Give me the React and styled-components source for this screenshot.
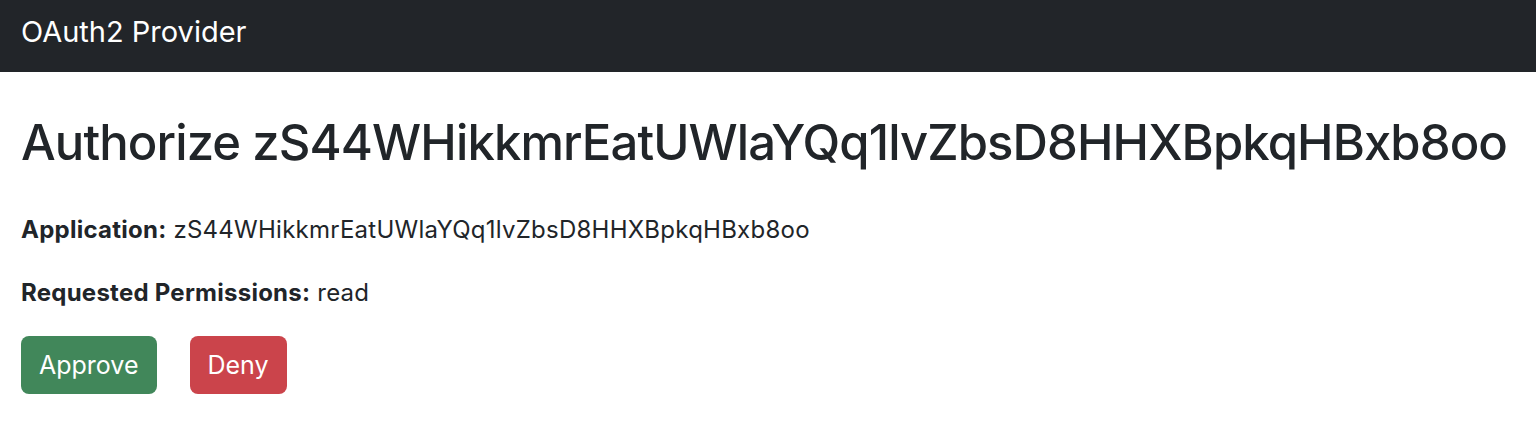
import React from 'react'
import styled, { createGlobalStyle } from 'styled-components'

const GlobalStyle = createGlobalStyle`
body {
  margin: 0;
  background: #ffffff;
  color: #212529;
  font-family: Inter, 'Liberation Sans', sans-serif;
}
`

const Navbar = styled.nav`
height: 72px;
background: #222529;
display: flex;
align-items: flex-start;
padding: 17px 21px 0 21px;
box-sizing: border-box;
`

const Brand = styled.span`
color: #ffffff;
font-size: 29px;
line-height: 29px;
`

const Container = styled.main`
padding: 41px 21px 0 21px;
`

const Title = styled.h1`
margin: 0 0 40px 0;
font-size: 49px;
font-weight: 500;
line-height: 59px;
letter-spacing: -0.9px;
white-space: nowrap;
color: #212529;
`

const Field = styled.p`
margin: 0 0 27px 0;
font-size: 24px;
line-height: 36px;
letter-spacing: 0.25px;

strong {
  font-weight: 700;
}
`

const Actions = styled.div`
display: flex;
gap: 33px;
margin-top: -2px;
`

const Button = styled.button`
height: 58px;
padding: 0 18px;
border: none;
border-radius: 8px;
background: ${p => p.variant === 'danger' ? '#cb444b' : '#41875a'};
color: #ffffff;
font-family: inherit;
font-size: 25px;
cursor: pointer;
`

const clientId = 'zS44WHikkmrEatUWlaYQq1lvZbsD8HHXBpkqHBxb8oo'

const App = () => {
  return (
    <>
      <GlobalStyle />
      <Navbar>
        <Brand>OAuth2 Provider</Brand>
      </Navbar>
      <Container>
        <Title>Authorize {clientId}</Title>
        <Field><strong>Application:</strong> {clientId}</Field>
        <Field><strong>Requested Permissions:</strong> read</Field>
        <Actions>
          <Button variant='success'>Approve</Button>
          <Button variant='danger'>Deny</Button>
        </Actions>
      </Container>
    </>
  )
}

export default App
